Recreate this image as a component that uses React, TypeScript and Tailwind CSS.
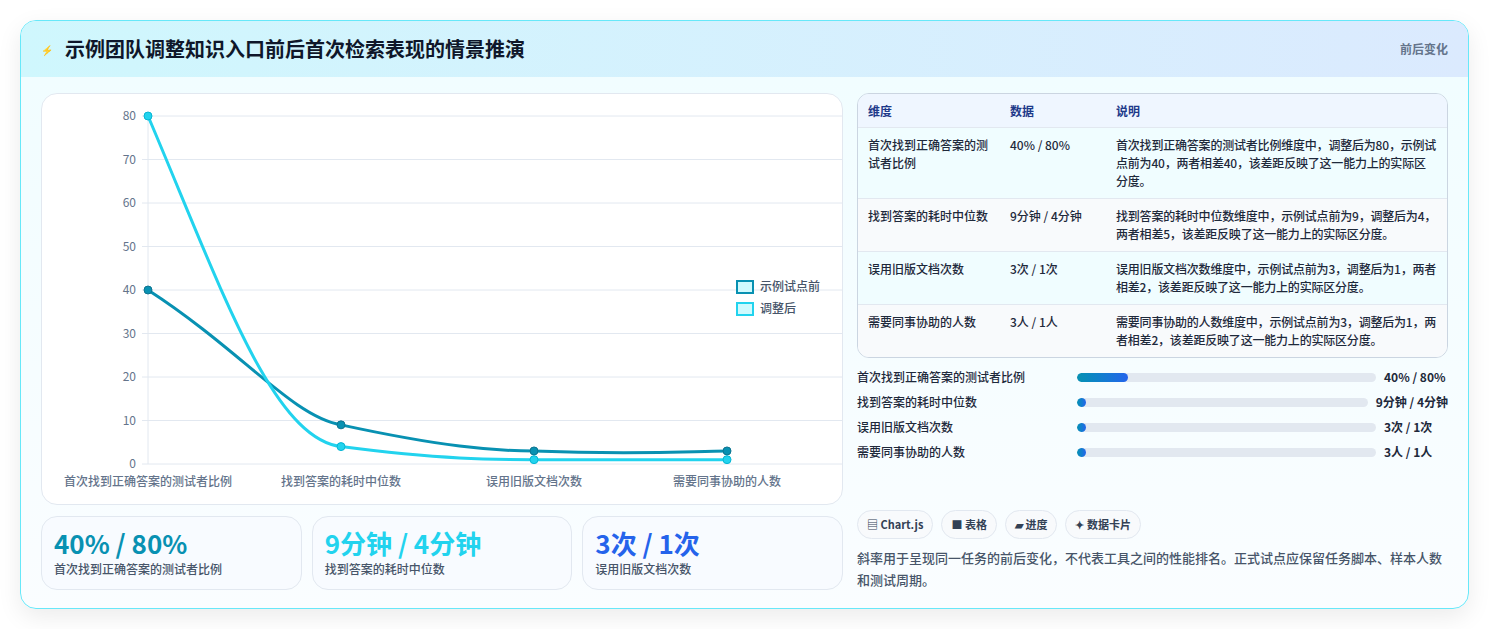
const F = { fontFamily: '"Noto Sans CJK SC", "Noto Sans", sans-serif' };

const rows = [
  ["首次找到正确答案的测试者比例", "40% / 80%", "首次找到正确答案的测试者比例维度中，调整后为80，示例试点前为40，两者相差40，该差距反映了这一能力上的实际区分度。"],
  ["找到答案的耗时中位数", "9分钟 / 4分钟", "找到答案的耗时中位数维度中，示例试点前为9，调整后为4，两者相差5，该差距反映了这一能力上的实际区分度。"],
  ["误用旧版文档次数", "3次 / 1次", "误用旧版文档次数维度中，示例试点前为3，调整后为1，两者相差2，该差距反映了这一能力上的实际区分度。"],
  ["需要同事协助的人数", "3人 / 1人", "需要同事协助的人数维度中，示例试点前为3，调整后为1，两者相差2，该差距反映了这一能力上的实际区分度。"],
];

const bars = [
  { l: "首次找到正确答案的测试者比例", v: "40% / 80%", w: 17 },
  { l: "找到答案的耗时中位数", v: "9分钟 / 4分钟", w: 2 },
  { l: "误用旧版文档次数", v: "3次 / 1次", w: 2 },
  { l: "需要同事协助的人数", v: "3人 / 1人", w: 2 },
];

const xs = [106, 299, 492, 685];
const y = (v: number) => 370 - v * 4.35;

function Chart() {
  const before = [40, 9, 3, 3];
  const after = [80, 4, 1, 1];
  const ticks = [0, 10, 20, 30, 40, 50, 60, 70, 80];
  const labels = ["首次找到正确答案的测试者比例", "找到答案的耗时中位数", "误用旧版文档次数", "需要同事协助的人数"];
  return (
    <svg width="800" height="410" className="block">
      {ticks.map((t) => (
        <g key={t}>
          <line x1="100" x2="800" y1={y(t)} y2={y(t)} stroke="#e2e8f0" />
          <text x="94" y={y(t) + 4} textAnchor="end" fontSize="12" fill="#64748b" style={F}>{t}</text>
        </g>
      ))}
      <line x1="106" x2="106" y1={y(80)} y2={y(0)} stroke="#e2e8f0" />
      {labels.map((l, i) => (
        <text key={l} x={xs[i]} y="392" textAnchor="middle" fontSize="12" fontWeight="500" fill="#64748b" style={F}>{l}</text>
      ))}
      <path d={`M106 ${y(40)} C200 ${y(26)} 250 ${y(11)} 299 ${y(9)} C400 ${y(4)} 450 ${y(3)} 492 ${y(3)} C600 ${y(2)} 650 ${y(3)} 685 ${y(3)}`} fill="none" stroke="#0891b2" strokeWidth="3" />
      <path d={`M106 ${y(80)} C180 ${y(40)} 230 ${y(6)} 299 ${y(4)} C400 ${y(1)} 450 ${y(1)} 492 ${y(1)} C600 ${y(1)} 650 ${y(1)} 685 ${y(1)}`} fill="none" stroke="#22d3ee" strokeWidth="3" />
      {before.map((v, i) => <circle key={"b" + i} cx={xs[i]} cy={y(v)} r="4" fill="#0891b2" stroke="#0e7490" />)}
      {after.map((v, i) => <circle key={"a" + i} cx={xs[i]} cy={y(v)} r="4" fill="#22d3ee" stroke="#06b6d4" />)}
      <rect x="695" y="187" width="16" height="12" fill="#cffafe" stroke="#0891b2" strokeWidth="2" />
      <text x="718" y="197" fontSize="12" fontWeight="500" fill="#475569" style={F}>示例试点前</text>
      <rect x="695" y="209" width="16" height="12" fill="#cffafe" stroke="#22d3ee" strokeWidth="2" />
      <text x="718" y="219" fontSize="12" fontWeight="500" fill="#475569" style={F}>调整后</text>
    </svg>
  );
}

export default function App() {
  return (
    <div className="min-h-screen bg-white p-5" style={F}>
      <div className="rounded-2xl border border-[#67e8f9] overflow-hidden shadow-[0_8px_24px_rgba(0,0,0,0.08)] bg-gradient-to-b from-[#f0fdff] to-[#fafdff]">
        <div className="h-14 flex items-center justify-between px-5 bg-gradient-to-r from-[#cff7fd] to-[#dbeafe]">
          <div className="flex items-center gap-3">
            <span className="text-[10px] text-[#2563eb]">⚡</span>
            <h1 className="text-xl font-bold text-[#0f172a]">示例团队调整知识入口前后首次检索表现的情景推演</h1>
          </div>
          <span className="text-xs font-semibold text-[#64748b]">前后变化</span>
        </div>
        <div className="flex gap-[14px] px-5 pt-4 pb-[17px]">
          <div className="w-[802px] flex flex-col gap-[11px]">
            <div className="rounded-2xl border border-[#e2e8f0] bg-white h-[412px] overflow-hidden">
              <Chart />
            </div>
            <div className="grid grid-cols-3 gap-[10px]">
              {[["40% / 80%", "text-[#0891b2]", "首次找到正确答案的测试者比例"], ["9分钟 / 4分钟", "text-[#22d3ee]", "找到答案的耗时中位数"], ["3次 / 1次", "text-[#2563eb]", "误用旧版文档次数"]].map(([v, c, l]) => (
                <div key={v} className="rounded-2xl border border-[#e2e8f0] bg-[#f8fbff] h-[74px] px-3 pt-2">
                  <div className={`text-[26px] font-bold leading-9 ${c}`}>{v}</div>
                  <div className="text-xs font-medium text-[#475569]">{l}</div>
                </div>
              ))}
            </div>
          </div>
          <div className="flex-1 flex flex-col">
            <div className="rounded-xl border border-[#cbd5e1] overflow-hidden text-xs font-medium text-[#1e293b]">
              <div className="grid grid-cols-[142px_106px_1fr] bg-[#eff6ff] h-[33px] items-center px-[10px] font-semibold text-[#1e3a8a]">
                <span>维度</span><span>数据</span><span>说明</span>
              </div>
              {rows.map((r, i) => (
                <div key={r[0]} className={`grid grid-cols-[142px_106px_1fr] px-[10px] py-[8px] border-t border-[#e2e8f0] leading-[18px] ${i % 2 ? "bg-[#f8fafc]" : "bg-[#f0fdff]"}`}>
                  <span className="pr-3">{r[0]}</span><span>{r[1]}</span><span className="tracking-[-0.2px]">{r[2]}</span>
                </div>
              ))}
            </div>
            <div className="flex flex-col gap-[9px] mt-[11px] text-xs font-medium text-[#1e293b]">
              {bars.map((b) => (
                <div key={b.l} className="flex items-center h-4 gap-2">
                  <span className="w-[212px] shrink-0">{b.l}</span>
                  <div className="flex-1 h-[9px] rounded-full bg-[#e2e8f0] overflow-hidden">
                    <div className="h-full rounded-full bg-gradient-to-r from-[#0891b2] to-[#2563eb] min-w-[9px]" style={{ width: b.w + "%" }} />
                  </div>
                  <span className="font-bold min-w-[64px] whitespace-nowrap shrink-0">{b.v}</span>
                </div>
              ))}
            </div>
            <div className="flex gap-2 mt-[50px] text-[11px] font-semibold text-[#334155]">
              {["▤ Chart.js", "■ 表格", "▰ 进度", "✦ 数据卡片"].map((t) => (
                <span key={t} className="rounded-full border border-[#e2e8f0] bg-[#f8fafc] px-[9px] py-[5px]">{t}</span>
              ))}
            </div>
            <p className="mt-[8px] text-[13px] leading-[22px] font-medium text-[#475569]">斜率用于呈现同一任务的前后变化，不代表工具之间的性能排名。正式试点应保留任务脚本、样本人数和测试周期。</p>
          </div>
        </div>
      </div>
    </div>
  );
}
